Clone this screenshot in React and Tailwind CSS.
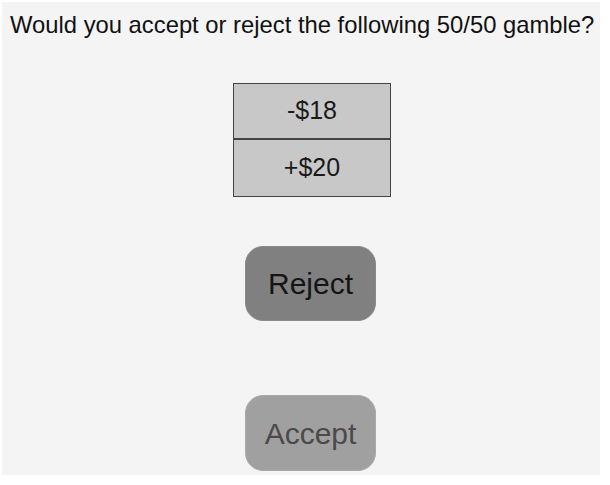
export default function App() {
  return (
    <div className="w-[610px] h-[485px] bg-white pt-[2px] pl-[2px]" style={{ fontFamily: '"Liberation Sans", Arial, sans-serif' }}>
      <div className="w-[598px] h-[473px] bg-[#f4f4f4] flex flex-col items-center">
        <p className="self-start pl-[8px] pt-[9px] text-[23.8px] leading-[27px] text-[#111]">
          Would you accept or reject the following 50/50 gamble?
        </p>

        <div className="mt-[45px] ml-[22px] w-[158px] border-[1.5px] border-[#444] bg-[#c8c8c8] text-[#1a1a1a] text-[25px]">
          <div className="h-[56px] flex items-center justify-center border-b-[2px] border-[#444]">-$18</div>
          <div className="h-[56px] flex items-center justify-center">+$20</div>
        </div>

        <button className="mt-[49px] ml-[19px] w-[131px] h-[75px] rounded-[18px] bg-[#808080] border border-[#8a8a8a] text-[30px] text-[#151515]">
          Reject
        </button>

        <button className="mt-[74px] ml-[19px] w-[131px] h-[76px] rounded-[18px] bg-[#a0a0a0] border border-[#aaa] text-[30px] text-[#4a4a4a]">
          Accept
        </button>
      </div>
    </div>
  );
}
